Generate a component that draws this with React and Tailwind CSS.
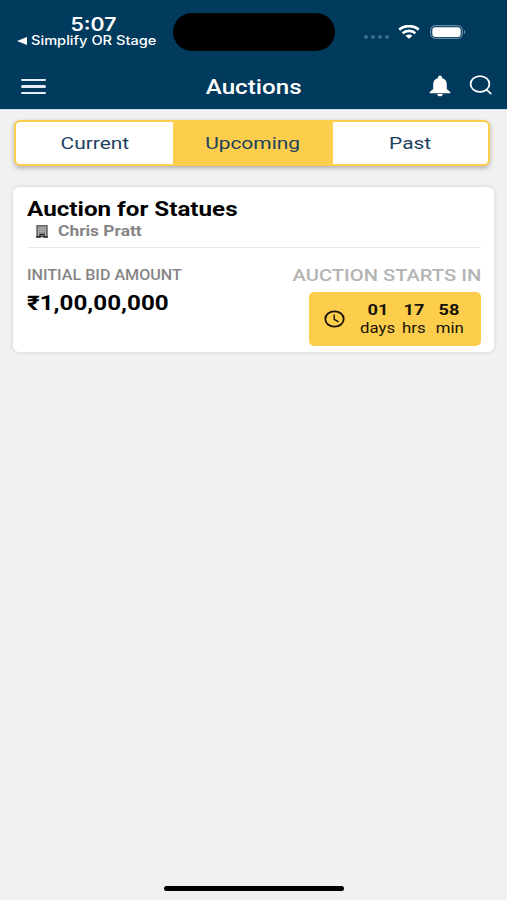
import React, { useState } from "react";

const tabs = ["Current", "Upcoming", "Past"];

const timeLeft = [
  { value: "01", label: "days", width: "w-[36px]" },
  { value: "17", label: "hrs", width: "w-[36px]" },
  { value: "58", label: "min", width: "w-[35px]" },
];

const StatusBar = () => (
  <div className="flex h-[64px] items-start text-white font-['Inter',sans-serif]">
    <div className="w-[173px] pt-[14px]">
      <div className="flex justify-center pl-[14px]">
        <span className="text-[18px] leading-[21px] font-semibold scale-x-[1.18]">5:07</span>
      </div>
      <div className="flex items-center pl-[17px] whitespace-nowrap text-[12.5px] leading-[12px]">
        <svg viewBox="0 0 10 8" className="h-[8px] w-[10px]" fill="currentColor">
          <path d="M0 4 10 0v8z" />
        </svg>
        <span className="ml-[4px] origin-left font-medium scale-x-[1.17]">Simplify OR Stage</span>
      </div>
    </div>
    <div className="mt-[13px] h-[38px] w-[162px] rounded-full bg-black" />
    <div className="mt-[24px] flex h-[16px] items-center">
      <div className="ml-[29px] mt-[9px] flex gap-[3px]">
        {[0, 1, 2, 3].map((dot) => (
          <span key={dot} className="size-[4px] rounded-full bg-[#3d6c8b]" />
        ))}
      </div>
      <svg viewBox="0 0 22 14" className="ml-[9px] h-[14px] w-[22px]" fill="none" stroke="currentColor" strokeWidth="2.7">
        <path d="M1.2 4.6C6.7-.1 15.3-.1 20.8 4.6" />
        <path d="M4.6 8.2c3.6-3 9.2-3 12.8 0" />
        <path d="M7.6 10.8c2-1.6 4.8-1.6 6.8 0L11 13.8z" fill="currentColor" stroke="none" />
      </svg>
      <svg viewBox="0 0 36 14" className="ml-[10px] h-[14px] w-[36px]" fill="none">
        <rect x=".7" y=".7" width="31.6" height="12.6" rx="4.4" stroke="#7f9fb4" />
        <rect x="2.3" y="2.2" width="28.4" height="9.8" rx="3" fill="white" />
        <path d="M34 5v4c1.6-.6 1.6-3.4 0-4z" fill="#7f9fb4" />
      </svg>
    </div>
  </div>
);

const Header = () => (
  <header className="h-[109px] bg-[#003a5d]">
    <StatusBar />
    <div className="grid h-[45px] grid-cols-3 items-center pl-[21px] pr-[14px] text-white">
      <button type="button" aria-label="Menu" className="flex w-[25px] flex-col gap-[4px]">
        <span className="h-[2.3px] rounded-full bg-[#e4edf5]" />
        <span className="h-[2.3px] rounded-full bg-[#e4edf5]" />
        <span className="h-[2.3px] rounded-full bg-[#e4edf5]" />
      </button>
      <h1 className="-translate-x-[3px] text-center text-[20px] font-medium scale-x-[1.21]">Auctions</h1>
      <div className="-mt-[3px] flex items-center justify-end gap-[18px]">
        <svg viewBox="0 0 22 22" className="mt-[2px] h-[22px] w-[22px]" fill="currentColor">
          <path d="M11 .5c-1.2 0-2 .8-2 1.9v.5C5.8 3.7 4.2 6.2 4.2 9.2v4.7L.8 17v1.2h20.4V17l-3.4-3.1V9.2c0-3-1.6-5.5-4.8-6.3v-.5c0-1.1-.8-1.900-2-1.900z" />
          <path d="M8.200 19h5.600c-.2 1.500-1.300 2.300-2.800 2.300S8.400 20.500 8.200 19z" />
        </svg>
        <svg viewBox="0 0 24 20" className="h-[20px] w-[24px]" fill="none" stroke="currentColor" strokeWidth="1.8" strokeLinecap="round">
          <ellipse cx="11" cy="9" rx="9.4" ry="7.9" />
          <path d="m17.6 14.7 4.2 3.9" />
        </svg>
      </div>
    </div>
  </header>
);

const AuctionCard = () => (
  <section className="mx-[13px] mt-[21px] h-[165px] rounded-[6px] bg-white pr-[13px] pl-[14px] pt-[10px] shadow-[0_0_4px_rgba(0,0,0,0.14)]">
    <h2 className="w-max origin-left text-[20px] leading-[24px] font-bold text-black scale-x-[1.21]">
      Auction for Statues
    </h2>
    <div className="flex h-[22px] items-center pl-[9px]">
      <svg viewBox="0 0 12 13" className="-mt-[1px] h-[13px] w-[12px]" fill="none">
        <path d="M1 .8h10v11H1z" fill="#aaa" stroke="#333" strokeWidth="1.1" />
        <path d="M3 3h1.3M5.4 3h1.3M7.7 3H9M3 5.3h1.3M5.4 5.3h1.3M7.7 5.3H9M3 7.6h1.3M5.4 7.6h1.3M7.7 7.6H9" stroke="#777" />
        <path d="M4 12V9.500h4V12M0 12.100h4.500M7.500 12.100H12" stroke="#222" strokeWidth="1.300" />
      </svg>
      <span className="ml-[10px] origin-left text-[14.5px] leading-[18px] font-bold text-[#858585] scale-x-[1.2]">
        Chris Pratt
      </span>
    </div>
    <hr className="mt-[4px] border-t-[1.5px] border-[#e9e9e9]" />
    <div className="flex justify-between">
      <div className="pt-[19px]">
        <p className="w-max origin-left text-[14px] leading-[16px] font-medium text-[#858585] scale-x-[1.15]">
          INITIAL BID AMOUNT
        </p>
        <p className="mt-[8px] w-max origin-left text-[20px] leading-[24px] font-bold text-black scale-x-[1.21]">
          ₹1,00,00,000
        </p>
      </div>
      <div className="flex flex-col items-end pt-[17px]">
        <p className="w-max origin-right text-[17px] leading-[20px] font-medium text-[#b4b4b4] scale-x-[1.185]">
          AUCTION STARTS IN
        </p>
        <div className="mt-[7px] flex h-[54px] w-[172px] items-center rounded-[5px] bg-[#fdce4b] pl-[15px] text-[#171308]">
          <svg viewBox="0 0 21 18" className="h-[18px] w-[21px]" fill="none" stroke="currentColor" strokeWidth="1.8">
            <ellipse cx="10.5" cy="9" rx="9.2" ry="7.7" />
            <path d="M10.2 4.5v4.8l4.4 2.5" strokeWidth="1.4" />
          </svg>
          <div className="ml-[15px] flex text-center text-[14px] leading-[18px]">
            {timeLeft.map((part) => (
              <div key={part.label} className={`${part.width} flex flex-col items-center`}>
                <span className="font-bold scale-x-[1.3]">{part.value}</span>
                <span className="scale-x-[1.2]">{part.label}</span>
              </div>
            ))}
          </div>
        </div>
      </div>
    </div>
  </section>
);

const App = () => {
  const [active, setActive] = useState("Upcoming");

  return (
    <div className="flex h-[900px] w-[507px] flex-col overflow-hidden bg-[#f1f1f1] font-['Roboto',sans-serif]">
      <Header />
      <div className="h-px bg-[#cfdfe9]" />
      <nav className="mr-[17px] ml-[14px] mt-[10px] grid h-[46px] grid-cols-[157px_160px_1fr] rounded-[6px] border-2 border-[#fdce4b] bg-white shadow-[0_2px_5px_rgba(0,0,0,0.28)]">
        {tabs.map((tab) => (
          <button
            key={tab}
            type="button"
            onClick={() => setActive(tab)}
            className={`pt-[2px] text-[17px] text-[#1d4160] ${active === tab ? "bg-[#fdce4b]" : ""}`}
          >
            <span className="inline-block scale-x-[1.23]">{tab}</span>
          </button>
        ))}
      </nav>
      <AuctionCard />
      <div className="mx-auto mt-auto mb-[9px] h-[5px] w-[180px] rounded-full bg-black" />
    </div>
  );
};

export default App;
